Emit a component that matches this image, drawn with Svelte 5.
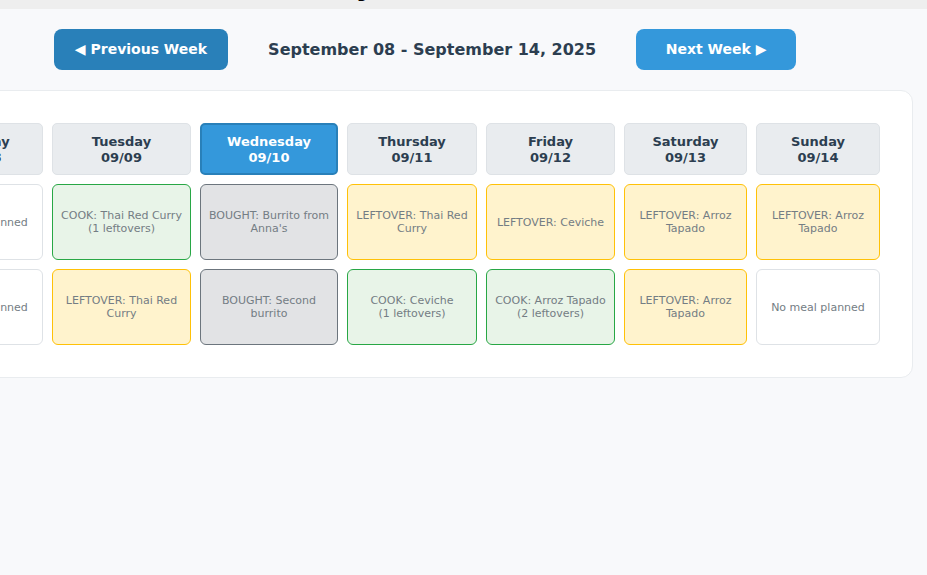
<script>
  const days = [
    { name: 'Monday', date: '09/08', width: 124 },
    { name: 'Tuesday', date: '09/09', width: 139 },
    { name: 'Wednesday', date: '09/10', width: 138, today: true },
    { name: 'Thursday', date: '09/11', width: 130 },
    { name: 'Friday', date: '09/12', width: 129 },
    { name: 'Saturday', date: '09/13', width: 123 },
    { name: 'Sunday', date: '09/14', width: 124 }
  ];

  const meals = [
    [
      { type: 'empty', text: 'No meal planned' },
      { type: 'cook', text: 'COOK: Thai Red Curry', note: '(1 leftovers)' },
      { type: 'bought', text: "BOUGHT: Burrito from Anna's" },
      { type: 'leftover', text: 'LEFTOVER: Thai Red Curry' },
      { type: 'leftover', text: 'LEFTOVER: Ceviche' },
      { type: 'leftover', text: 'LEFTOVER: Arroz Tapado' },
      { type: 'leftover', text: 'LEFTOVER: Arroz Tapado' }
    ],
    [
      { type: 'empty', text: 'No meal planned' },
      { type: 'leftover', text: 'LEFTOVER: Thai Red Curry' },
      { type: 'bought', text: 'BOUGHT: Second burrito' },
      { type: 'cook', text: 'COOK: Ceviche', note: '(1 leftovers)' },
      { type: 'cook', text: 'COOK: Arroz Tapado', note: '(2 leftovers)' },
      { type: 'leftover', text: 'LEFTOVER: Arroz Tapado' },
      { type: 'empty', text: 'No meal planned' }
    ]
  ];
</script>

<div class="page">
  <header class="banner"><h1>Weekly Meal Planner</h1></header>

  <nav class="week-nav">
    <button type="button" class="pressed">◀ Previous Week</button>
    <h2>September 08 - September 14, 2025</h2>
    <button type="button">Next Week ▶</button>
  </nav>

  <main class="card">
    <table>
      <colgroup>
        {#each days as day}<col style="width: {day.width}px" />{/each}
      </colgroup>
      <thead>
        <tr>
          {#each days as day}
            <th scope="col" class:today={day.today}>{day.name}<br />{day.date}</th>
          {/each}
        </tr>
      </thead>
      <tbody>
        {#each meals as row}
          <tr>
            {#each row as meal}
              <td class={meal.type}>{meal.text}{#if meal.note}<br />{meal.note}{/if}</td>
            {/each}
          </tr>
        {/each}
      </tbody>
    </table>
  </main>
</div>

<style>
  :global(body) {
    background: #f8f9fb;
    font-family: 'DejaVu Sans', Verdana, sans-serif;
  }

  .page {
    overflow: hidden;
  }

  .banner {
    display: flex;
    justify-content: center;
    align-items: flex-end;
    box-sizing: border-box;
    height: 9px;
    padding: 0 77px 7px 0;
    overflow: hidden;
    background: #eee;
  }

  h1 {
    margin: 0;
    color: #000;
    font-size: 28px;
    line-height: 32px;
    white-space: nowrap;
  }

  .week-nav {
    display: flex;
    justify-content: center;
    align-items: center;
    gap: 40px;
    padding: 20px 77px 20px 0;
  }

  h2 {
    margin: 0;
    color: #2c3e50;
    font-size: 16px;
    line-height: 20px;
    white-space: nowrap;
  }

  button {
    min-width: 160px;
    padding: 12px 21px;
    border: 0;
    border-radius: 8px;
    background: #3498db;
    color: #fff;
    font: bold 14px/17px 'DejaVu Sans', Verdana, sans-serif;
    white-space: nowrap;
    cursor: pointer;
  }

  button.pressed {
    background: #2980b9;
  }

  /* The week is wider than the viewport and runs off its left side. */
  .card {
    margin: 0 14px 0 -114px;
    padding: 23px;
    border: 1px solid #e9ecef;
    border-radius: 12px;
    background: #fff;
  }

  table {
    width: 100%;
    table-layout: fixed;
    border-collapse: separate;
    border-spacing: 9px;
  }

  th,
  td {
    box-sizing: border-box;
    padding: 7px;
    border: 1px solid #dee2e6;
    border-radius: 6px;
    text-align: center;
    vertical-align: middle;
  }

  th {
    height: 52px;
    padding: 9px 7px 7px;
    border-radius: 5px;
    background: #e9ecef;
    color: #2c3e50;
    font-size: 13px;
    line-height: 16px;
  }

  th.today {
    border: 2px solid #2980b9;
    background: #3498db;
    color: #fff;
  }

  td {
    height: 76px;
    color: #747d84;
    font-size: 11px;
    line-height: 13px;
  }

  .cook {
    border-color: #28a745;
    background: #e8f4e8;
  }

  .bought {
    border-color: #6c757d;
    background: #e2e3e5;
  }

  .leftover {
    border-color: #ffc107;
    background: #fff3cd;
  }
</style>
